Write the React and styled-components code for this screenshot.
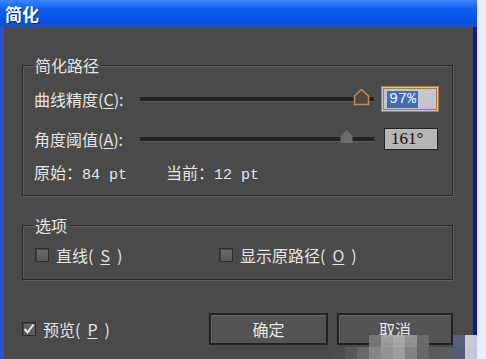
import React from "react";
import styled, { createGlobalStyle } from "styled-components";

const GlobalStyle = createGlobalStyle`
  html, body {
    margin: 0;
    padding: 0;
    background: #e9ecf2;
  }
  body {
    width: 486px;
    height: 359px;
    overflow: hidden;
    font-family: "Noto Sans CJK SC", "Liberation Sans", sans-serif;
  }
`;

const Window = styled.div`
  position: relative;
  width: 477px;
  height: 359px;
  display: flex;
  flex-direction: column;
`;

const TitleBar = styled.div`
  height: 27px;
  flex: none;
  display: flex;
  align-items: center;
  padding-left: 5px;
  background: linear-gradient(#3a86fa 0%, #0c5ef0 35%, #0850e2 80%, #1a4fc8 100%);
  color: #ffffff;
  font-size: 17px;
  font-weight: 700;
  text-shadow: 1px 1px 0 #0a2a80;
`;

const Body = styled.div`
  flex: 1;
  background: #4a4a4a;
  border-left: 4px solid #2a56c8;
  border-right: 4px solid #0c1c9a;
  padding: 30px 20px 0 18px;
  display: flex;
  flex-direction: column;
  color: #e4e4e4;
  font-size: 16px;
`;

const Group = styled.fieldset`
  margin: 0 0 ${(p) => p.$gap || 0}px 0;
  padding: 0;
  border: 1px solid #2a2a2a;
  box-shadow: inset 1px 1px 0 #5c5c5c, 1px 1px 0 #5c5c5c;
  min-width: 0;
`;

const Legend = styled.legend`
  margin-left: 10px;
  padding: 0 2px;
  line-height: 16px;
  font-size: 16px;
  color: #e4e4e4;
`;

const GroupContent = styled.div`
  display: flex;
  flex-direction: column;
  gap: ${(p) => p.$gap || 0}px;
  padding: ${(p) => p.$pad};
`;

const Row = styled.div`
  display: flex;
  align-items: center;
  height: ${(p) => p.$h}px;
  margin-top: ${(p) => p.$mt || 0}px;
`;

const Label = styled.span`
  width: 106px;
  flex: none;
  white-space: nowrap;
  line-height: 18px;
`;

const Key = styled.span`
  text-decoration: underline;
  text-underline-offset: 2px;
`;

const Track = styled.div`
  position: relative;
  width: 234px;
  height: 4px;
  flex: none;
  background: #232323;
  border-bottom: 1px solid #5a5a5a;
  margin-right: ${(p) => p.$mr}px;
`;

const Thumb = styled.svg`
  position: absolute;
  top: ${(p) => p.$top}px;
  left: ${(p) => p.$left}px;
`;

const ValueBox = styled.div`
  flex: none;
  width: ${(p) => p.$w}px;
  height: ${(p) => p.$h}px;
  box-sizing: border-box;
  display: flex;
  align-items: center;
  padding-left: ${(p) => p.$pl}px;
  background: ${(p) => p.$bg};
  border: 1px solid ${(p) => p.$border};
  box-shadow: ${(p) => p.$shadow || "none"};
  color: #111;
`;

const Selected = styled.span`
  background: #3f6cb4;
  color: #f0f4ff;
  font-family: "Liberation Mono", monospace;
  font-size: 15px;
  line-height: 17px;
  padding: 0 2px;
`;

const SerifValue = styled.span`
  font-family: "Liberation Serif", serif;
  font-size: 17px;
  line-height: 18px;
`;

const Stat = styled.span`
  width: ${(p) => p.$w}px;
  flex: none;
  white-space: nowrap;
  line-height: 18px;
`;

const Mono = styled.span`
  font-family: "Liberation Mono", monospace;
  font-size: 15px;
`;

const CheckItem = styled.label`
  display: flex;
  align-items: center;
  gap: 7px;
  width: ${(p) => p.$w || "auto"};
  white-space: nowrap;
  line-height: 18px;
`;

const Box = styled.span`
  width: 14px;
  height: 14px;
  flex: none;
  box-sizing: border-box;
  border: 1px solid #2c2c2c;
  background: linear-gradient(#6a6a6a, #575757);
  box-shadow: inset 1px 1px 0 #444;
  display: flex;
  align-items: center;
  justify-content: center;
`;

const Footer = styled.div`
  display: flex;
  align-items: center;
  margin-top: 33px;
  height: 32px;
`;

const Spacer = styled.div`
  flex: 1;
`;

const Button = styled.div`
  width: ${(p) => p.$w}px;
  height: 32px;
  box-sizing: border-box;
  margin-left: ${(p) => p.$ml || 0}px;
  border: 2px solid #222;
  box-shadow: inset 1px 1px 0 #6a6a6a;
  background: #545454;
  display: flex;
  align-items: center;
  justify-content: center;
  font-size: 16px;
  color: #e6e6e6;
`;

const Mosaic = styled.div`
  position: absolute;
  right: 0;
  bottom: 0;
  display: grid;
  grid-template-columns: repeat(12, 12px);
  grid-auto-rows: 12px;
  opacity: 0.9;
`;

const Tile = styled.div`
  background: ${(p) => p.$c};
`;

const mosaic = [
  "transparent", "transparent", "transparent", "#7a7a7a", "#a4a4a4", "#b2b2b2", "#9a9a9a", "#6e6e6e", "transparent", "transparent", "#5a6088", "#d8dbe4",
  "#4d4d4d", "#595959", "#6c6c6c", "#8e8e8e", "#9c9c9c", "#a8a8a8", "#8a8a8a", "#6a6a6a", "#5c5c5c", "#5e5e62", "#555c84", "#d4d7e0",
];

const HouseThumb = ({ left, top, outlined }) => (
  <Thumb $left={left} $top={top} width="17" height="18" viewBox="0 0 17 18">
    {outlined ? (
      <path d="M1.5 16.5 V8 L8.5 1.5 L15.5 8 V16.5 Z" fill="#4e4a46" stroke="#c48a4e" strokeWidth="1.5" />
    ) : (
      <path d="M2.5 16 V8.5 L8.5 3 L14.5 8.5 V16 Z" fill="#6c6c6c" />
    )}
  </Thumb>
);

const Check = () => (
  <svg width="12" height="12" viewBox="0 0 12 12">
    <path d="M1.5 6 L4.5 9.5 L10.5 1.5" fill="none" stroke="#e8e8e8" strokeWidth="2" />
  </svg>
);

export default function App() {
  return (
    <>
      <GlobalStyle />
      <Window>
        <TitleBar>简化</TitleBar>
        <Body>
          <Group $gap={21}>
            <Legend>简化路径</Legend>
            <GroupContent $pad="13px 0 12px 11px">
              <Row $h={26}>
                <Label>曲线精度(<Key>C</Key>):</Label>
                <Track $mr={7}>
                  <HouseThumb left={213} top={-9} outlined />
                </Track>
                <ValueBox
                  $w={58}
                  $h={26}
                  $pl={5}
                  $bg="#c3c6cf"
                  $border="#b27a42"
                  $shadow="inset 0 0 0 1px #c3c6cf, inset 0 0 0 2px #b27a42"
                >
                  <Selected>97%</Selected>
                </ValueBox>
              </Row>
              <Row $h={22} $mt={16}>
                <Label>角度阈值(<Key>A</Key>):</Label>
                <Track $mr={10}>
                  <HouseThumb left={198} top={-10} />
                </Track>
                <ValueBox $w={54} $h={22} $pl={6} $bg="#b6b6b6" $border="#262626">
                  <SerifValue>161°</SerifValue>
                </ValueBox>
              </Row>
              <Row $h={18} $mt={15}>
                <Stat $w={132}>
                  原始：<Mono>84 pt</Mono>
                </Stat>
                <Stat>
                  当前：<Mono>12 pt</Mono>
                </Stat>
              </Row>
            </GroupContent>
          </Group>
          <Group>
            <Legend>选项</Legend>
            <GroupContent $pad="13px 0 15px 12px">
              <Row $h={18}>
                <CheckItem $w="184px">
                  <Box />
                  直线(<Key>S</Key>)
                </CheckItem>
                <CheckItem>
                  <Box />
                  显示原路径(<Key>O</Key>)
                </CheckItem>
              </Row>
            </GroupContent>
          </Group>
          <Footer>
            <CheckItem>
              <Box>
                <Check />
              </Box>
              预览(<Key>P</Key>)
            </CheckItem>
            <Spacer />
            <Button $w={119}>确定</Button>
            <Button $w={116} $ml={9}>取消</Button>
          </Footer>
        </Body>
        <Mosaic>
          {mosaic.map((c, i) => (
            <Tile key={i} $c={c} />
          ))}
        </Mosaic>
      </Window>
    </>
  );
}
